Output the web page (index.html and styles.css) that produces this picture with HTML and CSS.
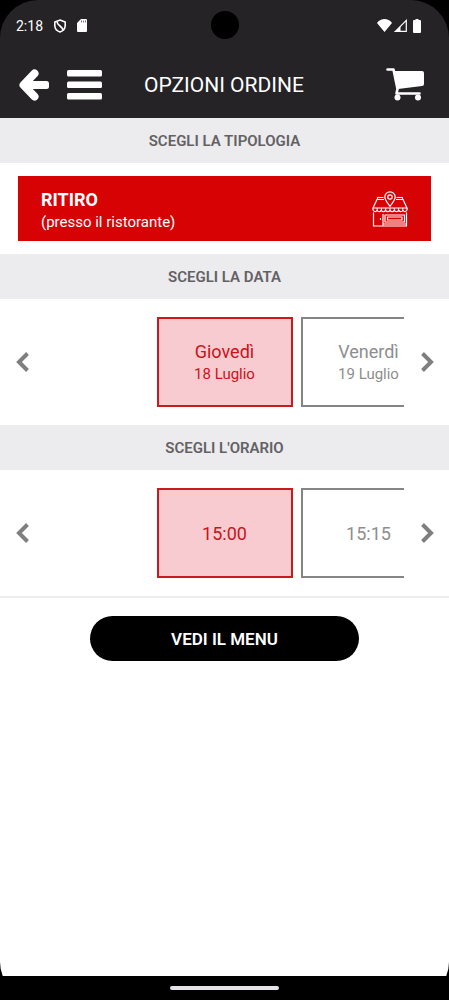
FILE: index.html
```html
<!DOCTYPE html>
<html lang="it">
<head>
    <meta charset="UTF-8">
    <meta name="viewport" content="width=device-width, initial-scale=1.0">
    <title>Opzioni ordine</title>
    <link rel="stylesheet" href="styles.css">
</head>
<body>
    <div class="phone">
        <!-- Status bar -->
        <div class="status-bar">
            <span class="clock">2:18</span>
            <svg class="icon-shield" width="14" height="14" viewBox="0 0 14 14" fill="none" stroke="#fff" stroke-width="1.600">
                <path d="M7 1 L12.200 3 V7 C12 10 10 12 7 13 C4 12 2 10 1.800 7 V3 Z"/>
                <path d="M4 2.500 C4 7 10 7 10 11.500"/>
            </svg>
            <svg class="icon-card" width="10" height="13" viewBox="0 0 10 13">
                <path fill="#fff" d="M4 0 H9 Q10 0 10 1 V12 Q10 13 9 13 H1 Q0 13 0 12 V4 Z"/>
                <path stroke="#777" d="M4.500 1.500 V3.500 M6.500 1.500 V3.500 M8.500 1.500 V3.500"/>
            </svg>
            <span class="camera"></span>
            <div class="status-right">
                <svg width="15" height="13" viewBox="0 0 15 13">
                    <path fill="#fff" d="M0 4 Q1 2 3.500 1 Q7.500 -0.800 11.500 1 Q14 2 15 4 L7.500 13 Z"/>
                </svg>
                <svg width="13" height="13" viewBox="0 0 13 13">
                    <path fill="none" stroke="#fff" stroke-width="1.200" d="M1.400 12.300 L12.300 1.400 V12.300 Z"/>
                    <path fill="#fff" d="M0.500 13 L6.500 7 V13 Z"/>
                </svg>
                <svg class="icon-battery" width="8" height="14" viewBox="0 0 8 14">
                    <path fill="#fff" d="M2.500 0 H5.500 V1 H7 Q8 1 8 2 V13 Q8 14 7 14 H1 Q0 14 0 13 V2 Q0 1 1 1 H2.500 Z"/>
                </svg>
            </div>
        </div>

        <header class="app-header">
            <button class="icon-button" aria-label="Indietro">
                <svg width="30" height="32" viewBox="0 0 30 32" fill="none" stroke="#fff" stroke-width="8" stroke-linejoin="round">
                    <path stroke-linecap="round" d="M15.500 4.500 L4.500 16 L15.500 27.500"/>
                    <path d="M5 16 H22"/>
                    <rect x="14" y="12" width="16" height="8" rx="2.500" fill="#fff" stroke="none"/>
                </svg>
            </button>
            <button class="icon-button menu-button" aria-label="Menu">
                <svg width="35" height="30" viewBox="0 0 35 30" fill="#fff">
                    <rect y="0" width="35" height="6.500" rx="1.500"/>
                    <rect y="11.500" width="35" height="6.500" rx="1.500"/>
                    <rect y="23" width="35" height="6.500" rx="1.500"/>
                </svg>
            </button>
            <h1>OPZIONI ORDINE</h1>
            <a href="#" class="cart" aria-label="Carrello">
                <svg width="38" height="33" viewBox="0 0 38 33">
                    <path fill="#fff" d="M7.500 3 H36 Q38 3 38 5 V16 Q38 18 36 18 L12 21 Z"/>
                    <path fill="none" stroke="#fff" stroke-width="2.600" stroke-linecap="round" stroke-linejoin="round" d="M1.500 1.500 H7.500 L11.500 21 L10.500 25.500 H33.500"/>
                    <circle cx="11.500" cy="29.500" r="3" fill="#fff"/>
                    <circle cx="32" cy="29.500" r="3" fill="#fff"/>
                </svg>
            </a>
        </header>

        <main>
            <h2>SCEGLI LA TIPOLOGIA</h2>
            <div class="type-section">
                <button class="type-button">
                    <span class="type-text">
                        <strong>RITIRO</strong>
                        <span>(presso il ristorante)</span>
                    </span>
                    <svg width="36" height="36" viewBox="0 0 36 36" fill="none" stroke="#fff" stroke-width="1.200" stroke-linejoin="round">
                        <path d="M12 8.500 H5 L1 17 H35 L31 8.500 H24 M5.500 8 V6.500 H11.500 M30.500 8 V6.500 H24.500"/>
                        <path d="M18 15.500 C15 11 12.800 8.800 12.800 6 A5.200 5.200 0 0 1 23.200 6 C23.200 8.800 21 11 18 15.500 Z"/>
                        <circle cx="18" cy="6" r="2.200"/>
                        <path d="M1 17 V19 Q3 22 5 19.500 Q7 22 9.200 19.500 Q11.400 22 13.600 19.500 Q15.800 22 18 19.500 Q20.200 22 22.400 19.500 Q24.600 22 26.800 19.500 Q29 22 31 19.500 Q33 22 35 19 V17"/>
                        <path stroke-width="1" d="M5.200 17 V20 M9.400 17 V20 M13.700 17 V20 M18 17 V20 M22.300 17 V20 M26.600 17 V20 M30.800 17 V20"/>
                        <path d="M1.500 21.500 V35 H34.500 V21.500 M11 35 V23"/>
                        <path d="M13 24 H32.500 V31 H13 Z M15.500 26 H30 V29 H15.500 Z M11 33 H34"/>
                        <path d="M8.500 27 V29"/>
                    </svg>
                </button>
            </div>

            <h2>SCEGLI LA DATA</h2>
            <div class="slider">
                <button class="arrow" aria-label="Data precedente">
                    <svg width="14" height="20" viewBox="0 0 14 20"><path d="M11.500 1.500 L3 10 L11.500 18.500"/></svg>
                </button>
                <div class="slides">
                    <button class="slide selected"><span class="slide-title">Giovedì</span><span>18 Luglio</span></button>
                    <button class="slide"><span class="slide-title">Venerdì</span><span>19 Luglio</span></button>
                </div>
                <button class="arrow" aria-label="Data successiva">
                    <svg width="14" height="20" viewBox="0 0 14 20"><path d="M2.500 1.500 L11 10 L2.500 18.500"/></svg>
                </button>
            </div>

            <h2>SCEGLI L'ORARIO</h2>
            <div class="slider slider-last">
                <button class="arrow" aria-label="Orario precedente">
                    <svg width="14" height="20" viewBox="0 0 14 20"><path d="M11.500 1.500 L3 10 L11.500 18.500"/></svg>
                </button>
                <div class="slides">
                    <button class="slide selected"><span class="slide-title">15:00</span></button>
                    <button class="slide"><span class="slide-title">15:15</span></button>
                </div>
                <button class="arrow" aria-label="Orario successivo">
                    <svg width="14" height="20" viewBox="0 0 14 20"><path d="M2.500 1.500 L11 10 L2.500 18.500"/></svg>
                </button>
            </div>

            <button class="view-menu">VEDI IL MENU</button>
        </main>

        <div class="nav-bar"><span></span></div>
    </div>
</body>
</html>
```
FILE: styles.css
```css
* {
    margin: 0;
    padding: 0;
    box-sizing: border-box;
    font-family: Roboto, Arial, sans-serif;
}

body {
    background-color: #000;
}

button {
    background: none;
    border: none;
    cursor: pointer;
}

svg {
    display: block;
}

.phone {
    display: flex;
    flex-direction: column;
    min-height: 100vh;
    background-color: #000;
    border-radius: 38px;
    overflow: hidden;
}

/* Status bar */
.status-bar {
    position: relative;
    display: flex;
    align-items: center;
    height: 51px;
    padding: 0 28px 0 16px;
    background-color: #252326;
    color: #fff;
}

.clock {
    font-size: 14px;
}

.icon-shield {
    margin-left: 10px;
}

.icon-card {
    margin-left: 10px;
}

.camera {
    position: absolute;
    left: 50%;
    top: 11px;
    width: 28px;
    height: 28px;
    margin-left: -14px;
    border-radius: 50%;
    background-color: #000;
}

.status-right {
    display: flex;
    align-items: center;
    gap: 2px;
    margin-left: auto;
}

.icon-battery {
    margin-left: 4px;
}

/* Header */
.app-header {
    display: flex;
    align-items: center;
    height: 67px;
    padding: 0 25px 0 19px;
    background-color: #252326;
    color: #fff;
}

.menu-button {
    margin-left: 18px;
}

.app-header h1 {
    flex: 1;
    margin-left: 42px;
    font-size: 21px;
    font-weight: 400;
    white-space: nowrap;
}

/* Sections */
main {
    flex: 1;
    background-color: #fff;
}

h2 {
    padding-top: 2px;
    background-color: #ecebed;
    color: #636164;
    font-size: 15px;
    font-weight: 600;
    line-height: 43px;
    text-align: center;
}

.type-section {
    padding: 13px 18px;
}

.type-button {
    display: flex;
    justify-content: space-between;
    align-items: center;
    width: 100%;
    height: 65px;
    padding: 0 23px;
    background-color: #d60204;
    color: #fff;
    text-align: left;
}

.type-text {
    display: flex;
    flex-direction: column;
    padding-top: 4px;
    font-size: 15px;
    line-height: 22px;
}

.type-text strong {
    font-size: 18px;
}

.slider {
    display: flex;
    align-items: center;
    height: 126px;
}

.slider-last {
    height: 128px;
    border-bottom: 2px solid #ecebed;
}

.arrow {
    display: flex;
    justify-content: center;
    align-items: center;
    flex: 0 0 45px;
    height: 90px;
}

.arrow path {
    fill: none;
    stroke: #7f7f7f;
    stroke-width: 4;
}

.slides {
    display: flex;
    flex: 1;
    gap: 8px;
    min-width: 0;
    padding-left: calc(50% - 113px);
    overflow: hidden;
}

.slide {
    display: flex;
    flex-direction: column;
    justify-content: center;
    align-items: center;
    flex: 0 0 136px;
    height: 90px;
    padding-top: 2px;
    border: 2px solid #858585;
    color: #8e8e8e;
    font-size: 15px;
    line-height: 22px;
}

.slide-title {
    font-size: 18px;
}

.slide.selected {
    border-color: #cb1a1e;
    background-color: #f8cbd0;
    color: #cc1219;
}

.view-menu {
    display: block;
    width: 60%;
    height: 45px;
    margin: 18px auto;
    border-radius: 23px;
    background-color: #000;
    color: #fff;
    font-size: 17px;
    font-weight: 600;
}

/* Android navigation bar */
.nav-bar {
    display: flex;
    justify-content: center;
    align-items: center;
    height: 24px;
    background-color: #000;
}

.nav-bar span {
    width: 109px;
    height: 4px;
    border-radius: 2px;
    background-color: #e6e3e8;
}
```
